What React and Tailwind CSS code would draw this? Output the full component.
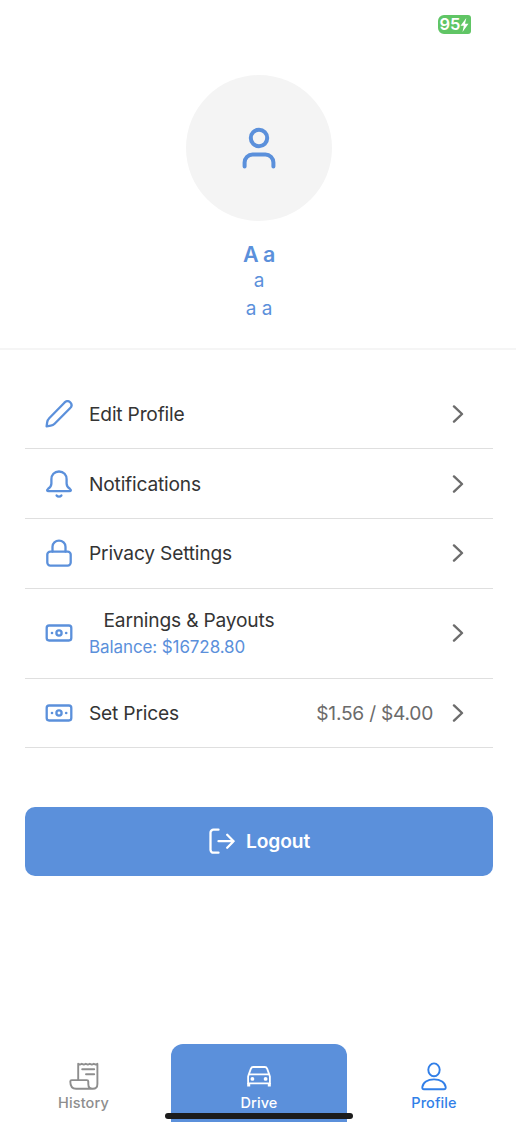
function Pencil() {
  return (
    <svg className="size-7" viewBox="0 0 28 28" fill="none" stroke="currentColor" strokeWidth="2.3" strokeLinecap="round" strokeLinejoin="round">
      <path d="M1.6 26.4 2.2 22.2a7 7 0 0 1 2-4L19.4 2.7c1.9-1.8 4.4-1.8 6-.2 1.5 1.6 1.4 4-.4 5.8L9.6 23.8a7 7 0 0 1-3.8 1.9Z" />
    </svg>
  );
}

function Bell() {
  return (
    <svg className="size-7" viewBox="0 0 28 28" fill="none" stroke="currentColor" strokeWidth="2.3" strokeLinecap="round" strokeLinejoin="round">
      <path d="M14 1.5C9.2 1.5 6.4 5 6.4 9.2v4.3c0 3-1.3 4-3.3 5.3-1.6 1.2-1.2 2.4.6 2.4h20.6c1.8 0 2.2-1.2.6-2.4-2-1.3-3.3-2.3-3.3-5.3V9.2C21.6 5 18.8 1.5 14 1.5Z" />
      <path d="M11.6 25.5c1.2 1.5 3.6 1.5 4.8 0" />
    </svg>
  );
}

function Lock() {
  return (
    <svg className="size-7" viewBox="0 0 28 28" fill="none" stroke="currentColor" strokeWidth="2.3" strokeLinecap="round" strokeLinejoin="round">
      <rect x="2.3" y="12.6" width="23.4" height="14" rx="3" />
      <path d="M7.5 12.6V7.7c0-3.3 2.9-6.1 6.5-6.1s6.5 2.8 6.5 6.1v4.9" />
    </svg>
  );
}

function Cash() {
  return (
    <svg className="size-7" viewBox="0 0 28 28" fill="none" stroke="currentColor" strokeWidth="2.3">
      <rect x="1.7" y="6.5" width="24.6" height="15" rx="2.4" />
      <circle cx="14" cy="14" r="2.6" />
      <circle cx="7" cy="14" r="1.3" fill="currentColor" stroke="none" />
      <circle cx="21.2" cy="14" r="1.3" fill="currentColor" stroke="none" />
    </svg>
  );
}

function Chevron() {
  return (
    <svg className="h-[18px] w-3 text-[#6c6c6c]" viewBox="0 0 12 18" fill="none" stroke="currentColor" strokeWidth="2.4" strokeLinecap="round" strokeLinejoin="round">
      <path d="m2 1.4 8 7.6-8 7.6" />
    </svg>
  );
}

function Row({ icon, children, value, height = "h-[69.7px]" }) {
  return (
    <div className={`flex items-center border-b border-[#dfdfdf] pr-[29px] pl-5 ${height}`}>
      <div className="text-[#5b90db]">{icon}</div>
      <div className="ml-4 grow text-[19.2px] leading-6 tracking-[-0.2px] text-[#343434]">{children}</div>
      {value && <div className="mr-[19px] text-[19.2px] leading-6 tracking-[-0.25px] text-[#6b6b6b]">{value}</div>}
      <Chevron />
    </div>
  );
}

export default function App() {
  return (
    <div className="flex h-[1122px] w-[516px] flex-col overflow-hidden bg-white font-['Inter',sans-serif]">
      <div className="flex h-[74.5px] justify-end pt-[15px] pr-[45px]">
        <div className="flex h-[19px] w-[33px] items-center justify-center rounded-l-[6px] rounded-r-[3px] bg-[#60c565] text-[16.5px] font-semibold text-white">
          <span>95</span>
          <svg className="h-[14px] w-[9px]" viewBox="0 0 8 14" fill="currentColor">
            <path d="M5.8 0 0 7.8h3.3L2 14l6-8.2H4.5Z" />
          </svg>
        </div>
      </div>

      <div className="flex h-[275.5px] flex-col items-center border-b-2 border-[#f5f5f5] pl-[2px] text-[#5b90db]">
        <div className="flex size-[146.5px] items-center justify-center rounded-full bg-[#f4f4f4]">
          <svg className="size-11" viewBox="0 0 44 44" fill="none" stroke="currentColor" strokeWidth="4" strokeLinecap="round">
            <circle cx="22" cy="12" r="8.2" />
            <path d="M7.6 40.4v-3.8a8 8 0 0 1 8-8h12.8a8 8 0 0 1 8 8v3.8" />
          </svg>
        </div>
        <div className="mt-[19px] text-[21.5px] leading-7 font-semibold tracking-[-0.5px]">A a</div>
        <div className="-mt-[1.5px] text-[19px] leading-7">a</div>
        <div className="text-[19px] leading-7">a a</div>
      </div>

      <div className="ml-[25px] flex w-[468px] flex-col pt-[29.5px]">
        <Row icon={<Pencil />}>Edit Profile</Row>
        <Row icon={<Bell />}>Notifications</Row>
        <Row icon={<Lock />}>Privacy Settings</Row>
        <Row icon={<Cash />} height="h-[90px]">
          <div className="pl-[14.5px] leading-7">Earnings &amp; Payouts</div>
          <div className="text-[17px] leading-[26px] tracking-[-0.1px] text-[#5b90db]">Balance: $16728.80</div>
        </Row>
        <Row icon={<Cash />} value="$1.56 / $4.00">Set Prices</Row>

        <button className="mt-[58.7px] flex h-[69px] items-center justify-center gap-[11px] rounded-[10px] bg-[#5b90db] pl-px text-[19.2px] font-semibold text-white">
          <svg className="h-[26px] w-[26px]" viewBox="0 0 26 26" fill="none" stroke="currentColor" strokeWidth="2.3" strokeLinecap="round" strokeLinejoin="round">
            <path d="M9.5 1.7h-5a3 3 0 0 0-3 3v17a3 3 0 0 0 3 3h5M9.5 13.2h15.1M18.2 6.7l6.4 6.5-6.4 6.5" />
          </svg>
          <span className="tracking-[-0.1px]">Logout</span>
        </button>
      </div>

      <nav className="relative mt-auto flex h-[78px] text-[14.5px] leading-5 font-medium">
        <div className="flex w-[167px] flex-col items-center pt-[17px] text-[#8e8e8e]">
          <svg className="h-[30px] w-8" viewBox="0 0 32 30" fill="none" stroke="currentColor" strokeWidth="1.9" strokeLinecap="round" strokeLinejoin="round">
            <path d="M10.2 19V2.8l1.6.8 2-.8 2 .8 2-.8 2 .8 2-.8 2 .8 2-.8 2 .8 1.6-.8V23c0 3-1.8 4.8-4.6 4.8s-4.5-2-4.5-4.8v-2.5c0-.8-.5-1.4-1.4-1.4H3.7c-.9 0-1.4.6-1.4 1.4 0 4.6 1.7 7.3 5.8 7.3h16.5M14.2 8.3h12M18 13.3h8.2" />
          </svg>
          <span className="mt-[2px] tracking-[0.15px]">History</span>
        </div>
        <div className="ml-1 flex w-44 flex-col items-center rounded-t-[12px] bg-[#5b90db] pt-[18px] text-white">
          <svg className="h-[30px] w-7" viewBox="0 0 28 30" fill="none" stroke="currentColor" strokeWidth="1.8" strokeLinejoin="round">
            <path d="m3.8 12.4 2-5.5c.5-1.3 1.1-1.9 2.4-1.9h11.6c1.3 0 1.9.6 2.4 1.9l2 5.5M3.8 12.4h20.4l.7 2.1v6.9H3.1v-6.9Z" />
            <path d="M3.7 21v3.4M24.3 21v3.4" strokeWidth="3" />
            <circle cx="7.4" cy="16.9" r="1.9" fill="currentColor" stroke="none" />
            <circle cx="20.6" cy="16.9" r="1.9" fill="currentColor" stroke="none" />
          </svg>
          <span className="mt-px tracking-[0.1px]">Drive</span>
        </div>
        <div className="flex grow flex-col items-center pt-[18px] pl-[5px] text-[#317fe8]">
          <svg className="h-[30px] w-7" viewBox="0 0 28 30" fill="none" stroke="currentColor" strokeWidth="1.9" strokeLinejoin="round">
            <ellipse cx="14" cy="7.8" rx="5.7" ry="6.4" />
            <path d="M4 27.2c-1.4 0-1.8-.8-1.7-2C2.9 20.6 7.4 17.4 14 17.4s11.1 3.2 11.7 7.8c.1 1.2-.3 2-1.7 2Z" />
          </svg>
          <span className="mt-px tracking-[0.1px]">Profile</span>
        </div>
        <div className="absolute bottom-[3px] left-[165px] h-[6px] w-[188px] rounded-full bg-[#1c1c1c]" />
      </nav>
    </div>
  );
}
